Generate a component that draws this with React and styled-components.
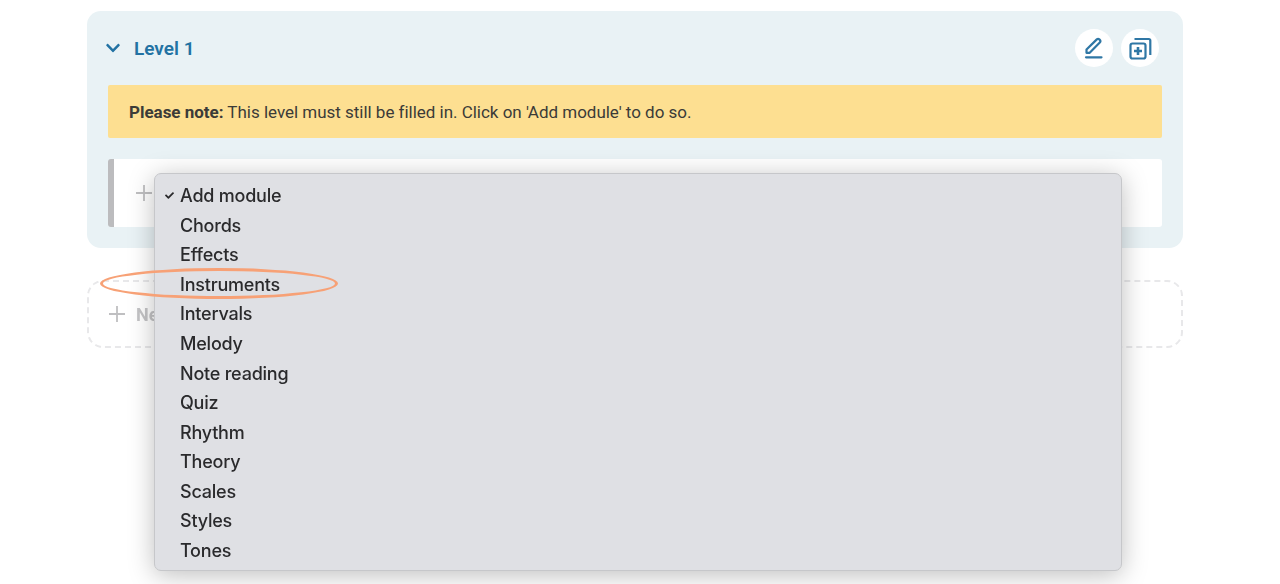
import React from 'react';
import styled, { createGlobalStyle } from 'styled-components';
import { FaChevronDown, FaCheck } from 'react-icons/fa';

const GlobalStyle = createGlobalStyle`
  html, body {
    margin: 0;
    padding: 0;
    background: #fff;
    height: 100%;
    overflow: hidden;
  }
`;

const modules = [
  'Chords',
  'Effects',
  'Instruments',
  'Intervals',
  'Melody',
  'Note reading',
  'Quiz',
  'Rhythm',
  'Theory',
  'Scales',
  'Styles',
  'Tones',
];

const PencilIcon = () => (
  <svg width='20' height='22' viewBox='0 0 20 22' fill='none' stroke='#2f77a5' strokeWidth='2.2' strokeLinejoin='round' strokeLinecap='round'>
    <path d='M2.500 12.500 12.800 2.400a1.800 1.800 0 0 1 2.500 0l.5.5a1.800 1.800 0 0 1 0 2.500L5.700 15.800H2.500z' />
    <path d='M2 20.300h15.500' strokeWidth='2.200' />
  </svg>
);

const CopyPlusIcon = () => (
  <svg width='23' height='23' viewBox='0 0 23 23' fill='none' stroke='#2f77a5' strokeWidth='2.2' strokeLinejoin='round'>
    <rect x='1.500' y='6.500' width='15' height='15' rx='2' />
    <path d='M5.500 2h14.300a1.500 1.500 0 0 1 1.500 1.500V18' />
    <path d='M9 10v8M5 14h8' strokeWidth='2.600' />
  </svg>
);

const PlusIcon = ({ size }) => (
  <svg width={size} height={size} viewBox='0 0 16 16' fill='none' stroke='#bfbfc1' strokeWidth='1.8'>
    <path d='M8 0v16M0 8h16' />
  </svg>
);

const App = () => (
  <Page>
    <GlobalStyle />
    <LevelCard>
      <LevelHeader>
        <Title>
          <FaChevronDown />
          Level 1
        </Title>
        <Actions>
          <RoundButton type='button'>
            <PencilIcon />
          </RoundButton>
          <RoundButton type='button'>
            <CopyPlusIcon />
          </RoundButton>
        </Actions>
      </LevelHeader>
      <Notice>
        <strong>Please note:</strong> This level must still be filled in. Click on 'Add module' to do so.
      </Notice>
      <ModuleRow>
        <PlusIcon size={16} />
      </ModuleRow>
    </LevelCard>

    <NewLevel>
      <PlusIcon size={16} />
      <span>New level</span>
    </NewLevel>

    <Menu>
      <MenuItem>
        <FaCheck />
        Add module
      </MenuItem>
      {modules.map((name) => (
        <MenuItem key={name}>{name}</MenuItem>
      ))}
    </Menu>
    <Highlight />
  </Page>
);

const Page = styled.div`
  position: relative;
  width: 1280px;
  height: 584px;
  box-sizing: border-box;
  padding: 11px 97px 0 87px;
  font-family: Roboto, 'Liberation Sans', sans-serif;
  overflow: hidden;
  filter: blur(0.5px);
`;

const LevelCard = styled.section`
  box-sizing: border-box;
  height: 237px;
  padding: 0 21px;
  background: #e9f2f5;
  border-radius: 14px;
`;

const LevelHeader = styled.header`
  display: flex;
  align-items: center;
  justify-content: space-between;
  height: 74px;
`;

const Title = styled.h2`
  display: flex;
  align-items: center;
  gap: 13px;
  margin: 0 0 0 -3px;
  font-size: 19px;
  font-weight: 600;
  color: #2272a3;

  svg {
    width: 16px;
    height: 16px;
  }
`;

const Actions = styled.div`
  display: flex;
  gap: 8px;
  margin-right: 3px;
`;

const RoundButton = styled.button`
  display: flex;
  align-items: center;
  justify-content: center;
  width: 38px;
  height: 38px;
  padding: 0;
  border: 0;
  border-radius: 50%;
  background: #fff;
`;

const Notice = styled.div`
  box-sizing: border-box;
  height: 53px;
  padding: 1px 21px 0;
  line-height: 53px;
  font-size: 17px;
  letter-spacing: -0.02px;
  color: #3b3b38;
  background: #fddf91;
  border-radius: 2px;

  strong {
    font-weight: 700;
  }
`;

const ModuleRow = styled.div`
  display: flex;
  align-items: center;
  box-sizing: border-box;
  height: 68px;
  margin-top: 21px;
  padding-left: 22px;
  background: #fff;
  border-left: 6px solid #bcbcbe;
  border-radius: 3px;
`;

const NewLevel = styled.div`
  display: flex;
  align-items: center;
  gap: 11px;
  box-sizing: border-box;
  height: 68px;
  margin-top: 32px;
  padding-left: 20px;
  font-size: 18px;
  font-weight: 700;
  color: #c4c4c6;
  border: 2px dashed #e8e8ea;
  border-radius: 16px;
`;

const Menu = styled.ul`
  position: absolute;
  left: 154px;
  top: 173px;
  box-sizing: border-box;
  width: 968px;
  height: 398px;
  margin: 0;
  padding: 7.300px 0 0 25px;
  list-style: none;
  background: #dfe0e4;
  border: 1px solid #c6c7ca;
  border-radius: 7px;
  box-shadow: 0 4px 26px rgba(0, 0, 0, 0.26);
`;

const MenuItem = styled.li`
  position: relative;
  height: 29.550px;
  line-height: 29.550px;
  font-family: Inter, Roboto, sans-serif;
  font-size: 18px;
  font-weight: 500;
  letter-spacing: -0.22px;
  color: #2a2a2c;

  svg {
    position: absolute;
    left: -15px;
    top: 10px;
    width: 9px;
    height: 9px;
  }
`;

const Highlight = styled.div`
  position: absolute;
  left: 100px;
  top: 268px;
  box-sizing: border-box;
  width: 238px;
  height: 31px;
  border: 3px solid #f7a176;
  border-radius: 50%;
`;

export default App;
